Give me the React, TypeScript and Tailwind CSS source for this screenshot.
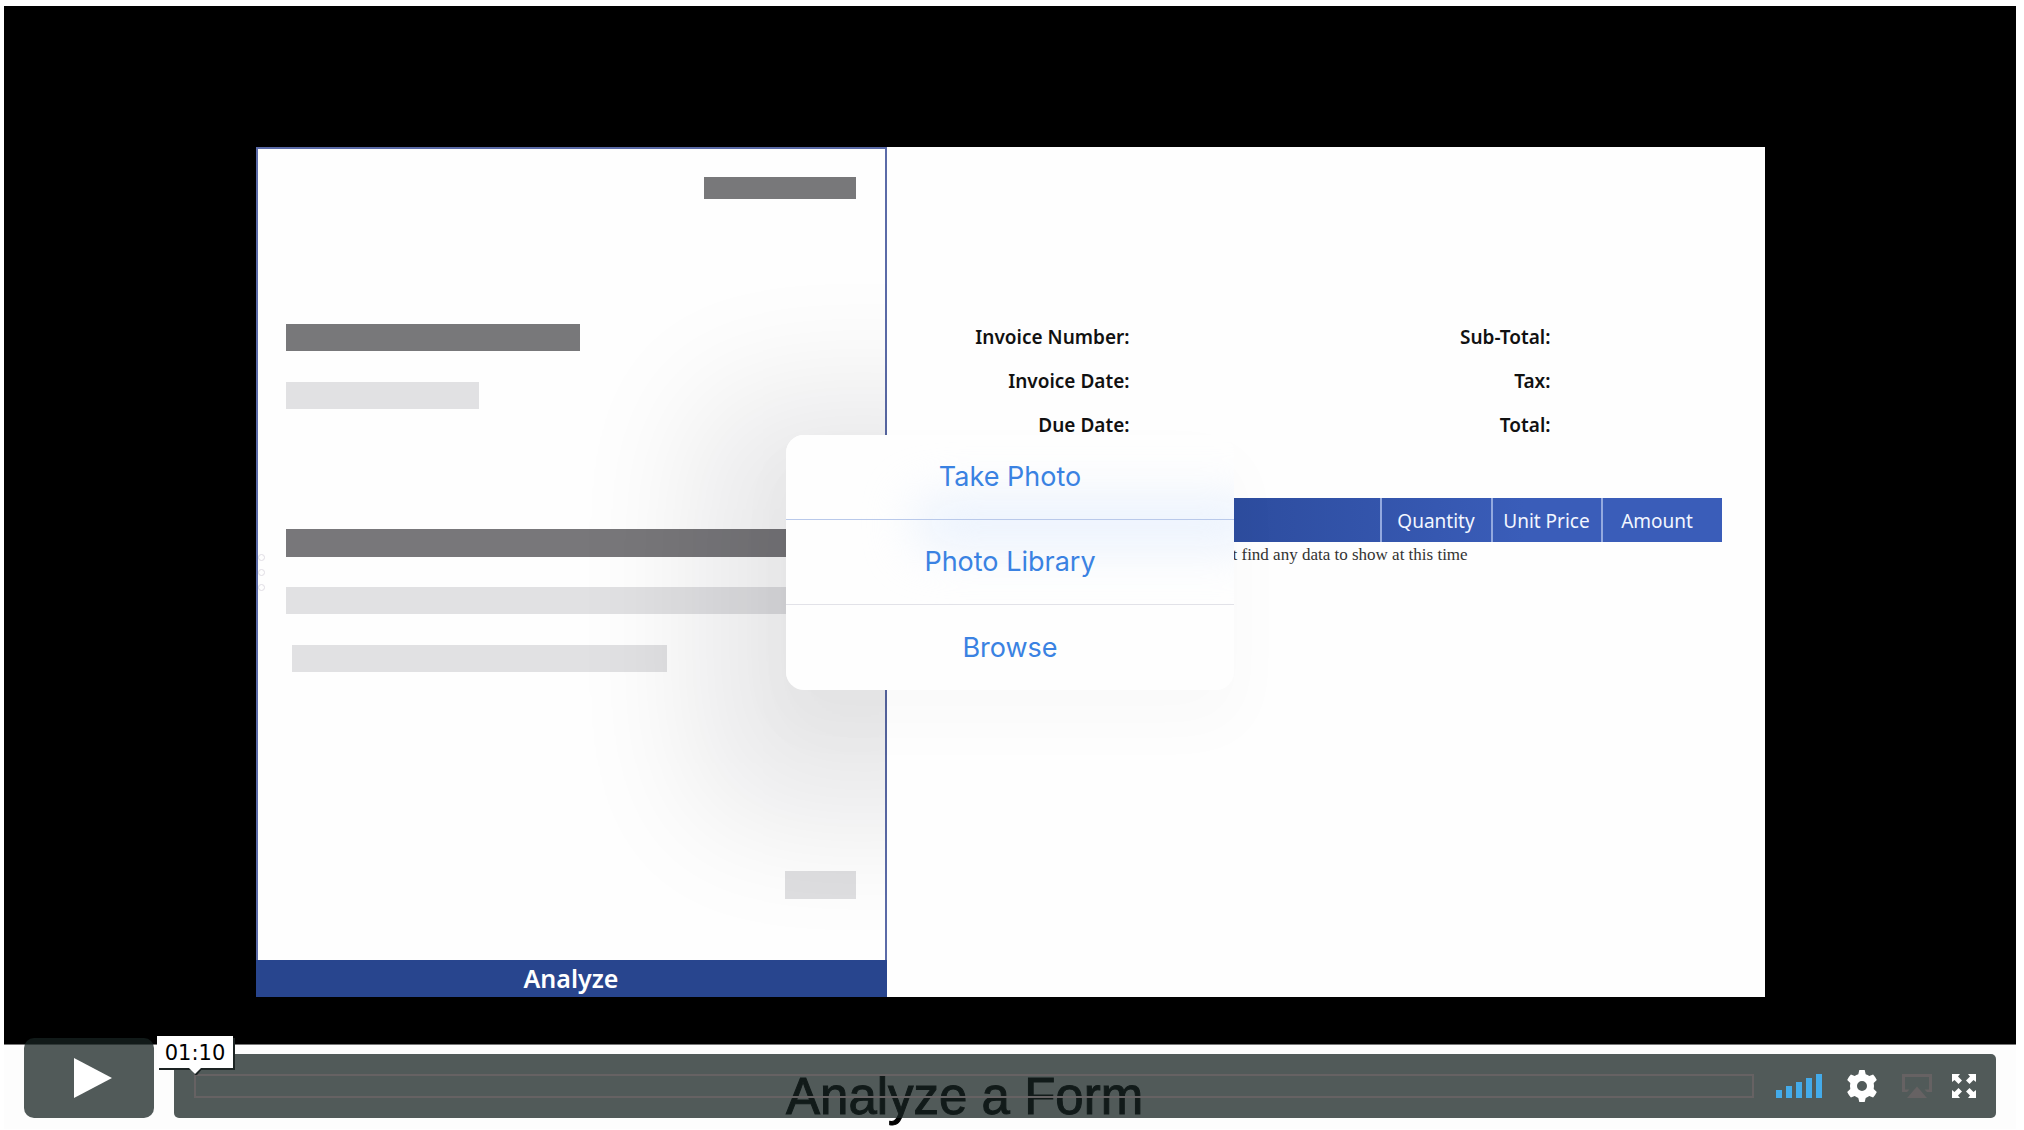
import React from "react";

const actions = [
  { label: "Take Photo", divider: "border-b border-[#b9c9ea]" },
  { label: "Photo Library", divider: "border-b border-[#e2e2e8]" },
  { label: "Browse", divider: "" },
];
const volumeBars = ["h-2", "h-3", "h-4", "h-5", "h-6"];

function FormPreview() {
  return (
    <section className="relative flex flex-col overflow-hidden bg-[#fefefe]">
      <div className="flex flex-1 flex-col border-2 border-b-0 border-[#5b6ba8] pl-7 pr-[29px] pt-7">
        <div className="h-[22px] w-[152px] self-end bg-[#78787a]" />
        <div className="mt-[125px] h-[27px] w-[294px] bg-[#78787a]" />
        <div className="mt-[31px] h-[27px] w-[193px] bg-[#e1e1e3]" />
        <div className="mt-[120px] h-7 w-full bg-[#78777a]" />
        <div className="mt-[30px] h-[27px] w-full bg-[#e1e1e3]" />
        <div className="ml-1.5 mt-[31px] h-[27px] w-[375px] bg-[#e1e1e3]" />
        <div className="mt-[199px] h-7 w-[71px] self-end bg-[#dfdfe1]" />
      </div>
      <button type="button" className="h-[37px] bg-[#28458e] pb-0.5 text-center font-['Noto_Sans'] text-[25px] font-semibold leading-[34px] text-white">
        Analyze
      </button>
      <div className="absolute left-0.5 top-[407px] flex flex-col gap-2">
        {[0, 1, 2].map((n) => (
          <span key={n} className="size-[7px] rounded-full border border-[#e0dde4]" />
        ))}
      </div>
      <div className="pointer-events-none absolute inset-x-0 bottom-[37px] top-0 overflow-hidden">
        <div className="absolute left-[84%] top-[288px] h-[254px] w-[448px] rounded-[18px] shadow-[0_45px_130px_90px_rgba(10,0,20,0.09)]" />
      </div>
    </section>
  );
}

function Totals({ labels, className }: { labels: string[]; className: string }) {
  return (
    <dl className={className}>
      {labels.map((label) => (
        <dt key={label} className="leading-[44px]">
          {label}
        </dt>
      ))}
    </dl>
  );
}

function InvoiceResult() {
  return (
    <section className="bg-[#fefefe] pl-[43px] pr-[43px] pt-[168px]">
      <div className="flex text-right font-['Noto_Sans'] text-[19px] font-semibold text-[#111]">
        <Totals labels={["Invoice Number:", "Invoice Date:", "Due Date:"]} className="w-[200px]" />
        <Totals labels={["Sub-Total:", "Tax:", "Total:"]} className="w-[421px]" />
      </div>
      <table className="mt-[51px] w-full table-fixed border-collapse">
        <thead>
          <tr className="h-11 bg-linear-to-r from-[#2c4b9c] from-35% to-[#3a5db9] to-75% font-['Noto_Sans'] text-[19px] text-[#f2f6ff]">
            <th scope="col" aria-label="Description" />
            <th scope="col" className="w-[111px] border-l-2 border-[#93a9df] pt-0.5 font-normal">Quantity</th>
            <th scope="col" className="w-[110px] border-l-2 border-[#93a9df] pt-0.5 font-normal">Unit Price</th>
            <th scope="col" className="w-[120px] border-l-2 border-[#93a9df] pr-2.5 pt-0.5 font-normal">Amount</th>
          </tr>
        </thead>
        <tbody>
          <tr>
            <td colSpan={4} className="pl-[303px] font-['Liberation_Serif'] text-[17px] leading-[26px] text-[#333]">
              t find any data to show at this time
            </td>
          </tr>
        </tbody>
      </table>
    </section>
  );
}

function PhotoMenu() {
  return (
    <div className="absolute inset-0 flex items-center justify-center pb-5">
      <div className="relative w-[448px] overflow-hidden rounded-[18px] bg-[#fefefe] shadow-[0_30px_60px_10px_rgba(20,0,60,0.02)]">
        <div className="absolute -right-8 left-32 top-16 h-12 rounded-full bg-[#e9f1fd] blur-xl" />
        {actions.map(({ label, divider }) => (
          <button
            key={label}
            type="button"
            className={"relative block h-[85px] w-full pt-0.5 text-center font-['Inter'] text-[27px] text-[#3a82e2] " + divider}
          >
            {label}
          </button>
        ))}
      </div>
    </div>
  );
}

function PlayerControls() {
  return (
    <div className="absolute inset-x-5 bottom-[11px] flex items-end gap-5">
      <button type="button" aria-label="Play" className="flex h-20 w-[130px] items-center justify-center rounded-[10px] bg-[#172322]/75">
        <svg width="38" height="40" viewBox="0 0 38 40" className="ml-2" fill="#fff">
          <path d="M0 0 38 20 0 40z" />
        </svg>
      </button>
      <div className="flex h-16 flex-1 items-center rounded-[5px] bg-[#172322]/75 px-5">
        <div className="relative mr-[22px] flex flex-1">
          <input
            type="range"
            aria-label="Seek"
            min={0}
            max={100}
            defaultValue={0}
            className="h-6 w-full appearance-none border-2 border-[#666263] bg-transparent [&::-webkit-slider-thumb]:appearance-none"
          />
          <output className="absolute -left-[37px] -top-[38px] h-8 w-[76px] bg-white text-center font-['DejaVu_Sans'] text-[21px] leading-[34px] text-black shadow-[2px_2px_0_#1d2424]">
            01:10
            <svg width="14" height="8" viewBox="0 0 14 8" className="absolute left-8 top-full">
              <path d="M2 0h12L8 7H6z" fill="#1d2424" />
              <path d="M0 0h12L6 6z" fill="#fff" />
            </svg>
          </output>
        </div>
        <button type="button" aria-label="Volume" className="mr-[25px] flex items-end gap-1">
          {volumeBars.map((h) => (
            <span key={h} className={"w-1.5 bg-[#44abea] " + h} />
          ))}
        </button>
        <button type="button" aria-label="Settings" className="mr-[25px]">
          <svg width="30" height="32" viewBox="0 0 30 32" fill="#fff">
            <path
              fillRule="evenodd"
              d="M12.3 0h5.400l1 4.200q2 .6 3.600 1.700l3.800-1.300q2.300 2.400 3.700 5.400L26.700 12.900q.6 3 0 6.200L29.800 22q-1.400 3-3.700 5.400l-3.800-1.300q-1.600 1.200-3.600 1.800l-1 4.100h-5.400l-1-4.100q-2-.6-3.600-1.800l-3.800 1.300Q1.600 25 .2 22l3.100-2.900q-.6-3.200 0-6.200L.2 10q1.400-3 3.700-5.400l3.800 1.300q1.600-1.100 3.600-1.700zM15 11a5 5 0 1 0 0 10 5 5 0 0 0 0-10z"
            />
          </svg>
        </button>
        <button type="button" aria-label="AirPlay" className="mr-5">
          <svg width="30" height="24" viewBox="0 0 30 24" fill="#666263">
            <path d="M0 0h30v18h-5l-2.500-2.500H27V3H3v12.500h4.500L5 18H0z" />
            <path d="M15 12.500 25 24H5z" />
          </svg>
        </button>
        <button type="button" aria-label="Full screen">
          <svg width="24" height="24" viewBox="0 0 24 24" fill="#fff">
            <path d="M0 0h8L6 2.500l4 4L6.500 10l-4-4L0 8z" />
            <path d="M24 0v8l-2.500-2-4 4L14 6.500l4-4L16 0z" />
            <path d="M24 24h-8l2-2.500-4-4 3.500-3.500 4 4 2.500-2z" />
            <path d="M0 24v-8l2.500 2 4-4L10 17.500l-4 4L8 24z" />
          </svg>
        </button>
      </div>
    </div>
  );
}

export default function App() {
  return (
    <main className="bg-white pb-px pl-1 pr-2 pt-1.5">
      <div className="relative bg-[#fdfdfd]">
        <div className="border-b border-[#777] bg-black pb-[47px] pt-[141px]">
          <div className="relative mx-auto grid min-h-[850px] w-3/4 grid-cols-[631fr_878fr]">
            <FormPreview />
            <InvoiceResult />
            <PhotoMenu />
          </div>
        </div>
        <h1 className="h-[84px] pl-[782px] font-['Liberation_Sans'] text-[51px] leading-[104px] text-black [-webkit-text-stroke:1px_black]">
          Analyze a Form
        </h1>
        <PlayerControls />
      </div>
    </main>
  );
}
